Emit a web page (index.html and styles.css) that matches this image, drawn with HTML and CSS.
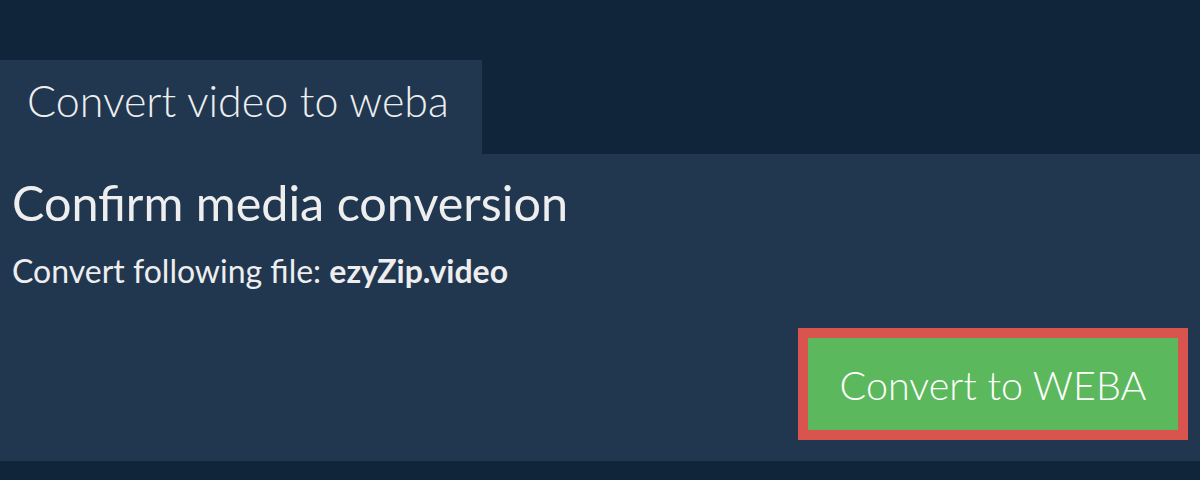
FILE: index.html
```html
<!DOCTYPE html>
<html>
<head>
<meta charset="utf-8">
<link rel="stylesheet" href="styles.css">
</head>
<body>
<div class="page">
  <div class="tab">Convert video to weba</div>
  <div class="panel">
    <h1 class="title">Confirm media conversion</h1>
    <p class="info">Convert following file: <b>ezyZip.video</b></p>
    <div class="actions">
      <button class="convert">Convert to WEBA</button>
    </div>
  </div>
</div>
</body>
</html>
```
FILE: styles.css
```css
html, body {
  margin: 0;
  padding: 0;
  background: #10243a;
  width: 1200px;
  height: 480px;
  overflow: hidden;
  font-family: Lato, "Noto Sans", sans-serif;
  color: #eeeeee;
}
.page {
  padding-top: 60px;
}
.tab {
  display: block;
  width: 482px;
  height: 94px;
  box-sizing: border-box;
  background: #213750;
  font-weight: 300;
  font-size: 43px;
  line-height: 82px;
  padding-left: 27px;
}
.panel {
  background: #213750;
  height: 307px;
  box-sizing: border-box;
  padding: 19px 12px 0 12px;
}
.title {
  margin: 0;
  font-size: 48.5px;
  font-weight: 400;
  line-height: 58px;
}
.info {
  margin: 21px 0 0 0;
  font-size: 32px;
  line-height: 38px;
}
.info b {
  font-weight: 700;
}
.actions {
  display: flex;
  justify-content: flex-end;
  margin-top: 38px;
}
.convert {
  background: #5cb85c;
  border: 10px solid #d9534f;
  color: #ffffff;
  font-family: Lato, "Noto Sans", sans-serif;
  font-weight: 300;
  font-size: 39.5px;
  width: 390px;
  height: 112px;
  padding: 0;
  margin: 0;
  cursor: pointer;
}
```
